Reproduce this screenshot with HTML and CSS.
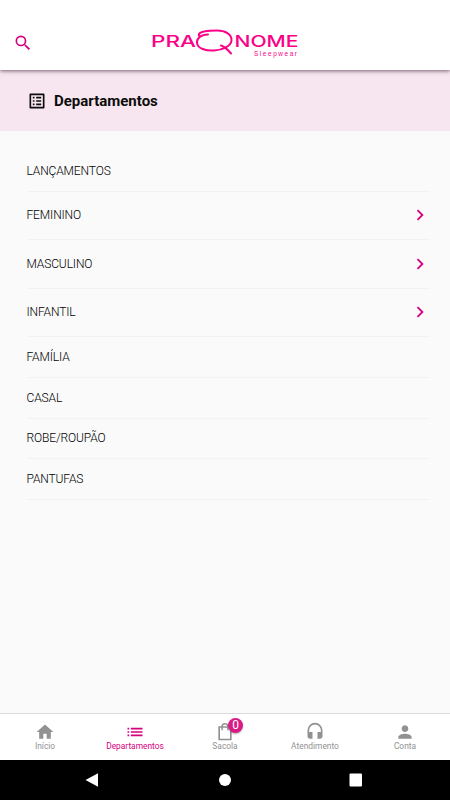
FILE: index.html
```html
<!DOCTYPE html>
<html lang="pt-BR">
<head>
<meta charset="utf-8">
<meta name="viewport" content="width=device-width, initial-scale=1">
<title>Departamentos</title>
<link rel="stylesheet" href="styles.css">
</head>
<body>
<div class="app">
  <header class="topbar">
    <svg class="search" viewBox="0 0 24 24"><path d="M15.5 14h-.79l-.28-.27A6.47 6.47 0 0 0 16 9.5 6.5 6.5 0 1 0 9.5 16c1.61 0 3.09-.59 4.23-1.57l.27.28v.79l5 4.99L20.49 19l-4.99-5zm-6 0a4.5 4.5 0 1 1 0-9 4.5 4.5 0 0 1 0 9z"/></svg>
    <svg class="logo" viewBox="0 0 150 32">
      <text class="brand" x="0" y="21" textLength="45" lengthAdjust="spacingAndGlyphs">PRA</text>
      <g class="swoosh">
        <path d="M57 8.500C50 8.500 45.500 12.500 46 17C46.500 22.500 55 25 63 24.500C72 24 80 20 80.500 14.500C81 8 74 4.500 66 4.500C58 4.500 49.500 5.500 48 8C47.500 9 48 10 49 10.500"/>
        <path d="M70 19.500C74 20.500 77 24 80 27.500"/>
      </g>
      <text class="brand" x="83.500" y="21" textLength="64" lengthAdjust="spacingAndGlyphs">NOME</text>
      <text class="tagline" x="103" y="30" textLength="43">Sleepwear</text>
    </svg>
  </header>
  <section class="title">
    <svg class="title-icon" viewBox="0 0 24 24"><path d="M19 5v14H5V5h14m1.100-2H3.900c-.5 0-.9.400-.9.900v16.200c0 .4.400.9.900.9h16.200c.4 0 .9-.5.9-.9V3.900c0-.5-.5-.9-.9-.9zM11 7h6v2h-6V7zm0 4h6v2h-6v-2zm0 4h6v2h-6v-2zM7 7h2v2H7V7zm0 4h2v2H7v-2zm0 4h2v2H7v-2z"/></svg>
    <h1>Departamentos</h1>
  </section>
  <main class="list">
    <div class="row">LANÇAMENTOS</div>
    <div class="row more">FEMININO<svg class="chevron" viewBox="0 0 24 24"><path d="M10 6 8.590 7.410 13.170 12l-4.580 4.590L10 18l6-6z"/></svg></div>
    <div class="row more">MASCULINO<svg class="chevron" viewBox="0 0 24 24"><path d="M10 6 8.590 7.410 13.170 12l-4.580 4.590L10 18l6-6z"/></svg></div>
    <div class="row more">INFANTIL<svg class="chevron" viewBox="0 0 24 24"><path d="M10 6 8.590 7.410 13.170 12l-4.580 4.590L10 18l6-6z"/></svg></div>
    <div class="row">FAMÍLIA</div>
    <div class="row">CASAL</div>
    <div class="row">ROBE/ROUPÃO</div>
    <div class="row">PANTUFAS</div>
  </main>
  <nav class="tabs">
    <div class="tab"><svg viewBox="0 0 24 24"><path d="M10 20v-6h4v6h5v-8h3L12 3 2 12h3v8z"/></svg><span>Início</span></div>
    <div class="tab active"><svg viewBox="0 0 24 24"><path d="M3 13h2v-2H3v2zm0 4h2v-2H3v2zm0-8h2V7H3v2zm4 4h14v-2H7v2zm0 4h14v-2H7v2zM7 7v2h14V7H7z"/></svg><span>Departamentos</span></div>
    <div class="tab"><div class="bag"><svg viewBox="0 0 24 24"><path d="M4 5h16v17H4zM6 7v13h12V7z" fill-rule="evenodd"/><path class="handle" d="M8.500 10V5.500a3.500 3.500 0 0 1 7 0V10"/></svg><b class="badge">0</b></div><span>Sacola</span></div>
    <div class="tab"><svg viewBox="0 0 24 24"><path d="M12 1a9 9 0 0 0-9 9v7c0 1.660 1.340 3 3 3h3v-8H5v-2a7 7 0 0 1 14 0v2h-4v8h3c1.660 0 3-1.340 3-3v-7a9 9 0 0 0-9-9z"/></svg><span>Atendimento</span></div>
    <div class="tab"><svg viewBox="0 0 24 24"><path d="M12 12c2.210 0 4-1.790 4-4s-1.790-4-4-4-4 1.790-4 4 1.790 4 4 4zm0 2c-2.670 0-8 1.340-8 4v2h16v-2c0-2.660-5.330-4-8-4z"/></svg><span>Conta</span></div>
  </nav>
  <footer class="system">
    <svg viewBox="0 0 16 16"><path d="M1.500 8 14 1.200v13.600z"/></svg>
    <svg viewBox="0 0 16 16"><circle cx="9" cy="8" r="6"/></svg>
    <svg viewBox="0 0 16 16"><rect x="1.500" y="1.500" width="12.500" height="13" rx="1"/></svg>
  </footer>
</div>
</body>
</html>
```

FILE: styles.css
```css
* { box-sizing: border-box; }
body { margin: 0; font-family: Roboto, "Liberation Sans", sans-serif; background: #fafafa; }
svg { display: block; fill: currentColor; flex: none; }
.app { width: 450px; height: 800px; display: flex; flex-direction: column; overflow: hidden; }

.topbar {
  height: 70px;
  padding: 26px 0 0 13px;
  display: flex;
  align-items: flex-start;
  background: #fff;
  box-shadow: 0 1px 4px rgba(40, 0, 25, .6);
  position: relative;
}
.search { width: 20px; height: 20px; margin-top: 7px; color: #d6007f; }
.logo { width: 150px; height: 32px; margin-left: 118px; color: #fb0188; }
.brand { font: 500 15.5px Inter, sans-serif; }
.tagline { font: 6.5px "Liberation Sans", sans-serif; }
.swoosh { fill: none; stroke: currentColor; stroke-width: 2; stroke-linecap: round; }

.title {
  height: 61px;
  padding-left: 27px;
  display: flex;
  align-items: center;
  gap: 7px;
  background: #f7e6ef;
  color: #0c0c0c;
}
.title-icon { width: 20px; height: 20px; }
h1 { margin: 0; font-size: 15px; font-weight: 700; line-height: 20px; letter-spacing: 0; }

.list { flex: 1; padding: 20px 20px 0 26.500px; color: #000; }
.row {
  height: 40.800px;
  display: flex;
  align-items: center;
  justify-content: space-between;
  border-bottom: 1px solid #f2f2f2;
  font-size: 12px;
  font-weight: 350;
  letter-spacing: -.13px;
}
.more { height: 48.400px; }
.chevron { width: 22px; height: 22px; margin-right: -1px; color: #d6007f; }

.tabs {
  height: 47px;
  display: grid;
  grid-template-columns: repeat(5, 1fr);
  border-top: 1px solid #dadada;
  background: #fff;
  color: #929292;
}
.tab { display: flex; flex-direction: column; align-items: center; padding-top: 7.500px; font-size: 8.400px; line-height: 9px; }
.tab svg { width: 20px; height: 20px; }
.active { color: #d6007f; }
.bag { position: relative; }
.handle { fill: none; stroke: currentColor; stroke-width: 1.800; }
.badge {
  position: absolute;
  left: 13px;
  top: -3.500px;
  width: 15px;
  height: 15px;
  border-radius: 50%;
  background: #d81b86;
  color: #fff;
  font-size: 12px;
  font-weight: 400;
  line-height: 15px;
  text-align: center;
  box-shadow: 0 1px 2px rgba(0, 0, 0, .3);
}

.system { height: 40px; padding: 0 86px 0 84px; display: flex; align-items: center; justify-content: space-between; background: #000; color: #fff; }
.system svg { width: 16px; height: 16px; }
```
